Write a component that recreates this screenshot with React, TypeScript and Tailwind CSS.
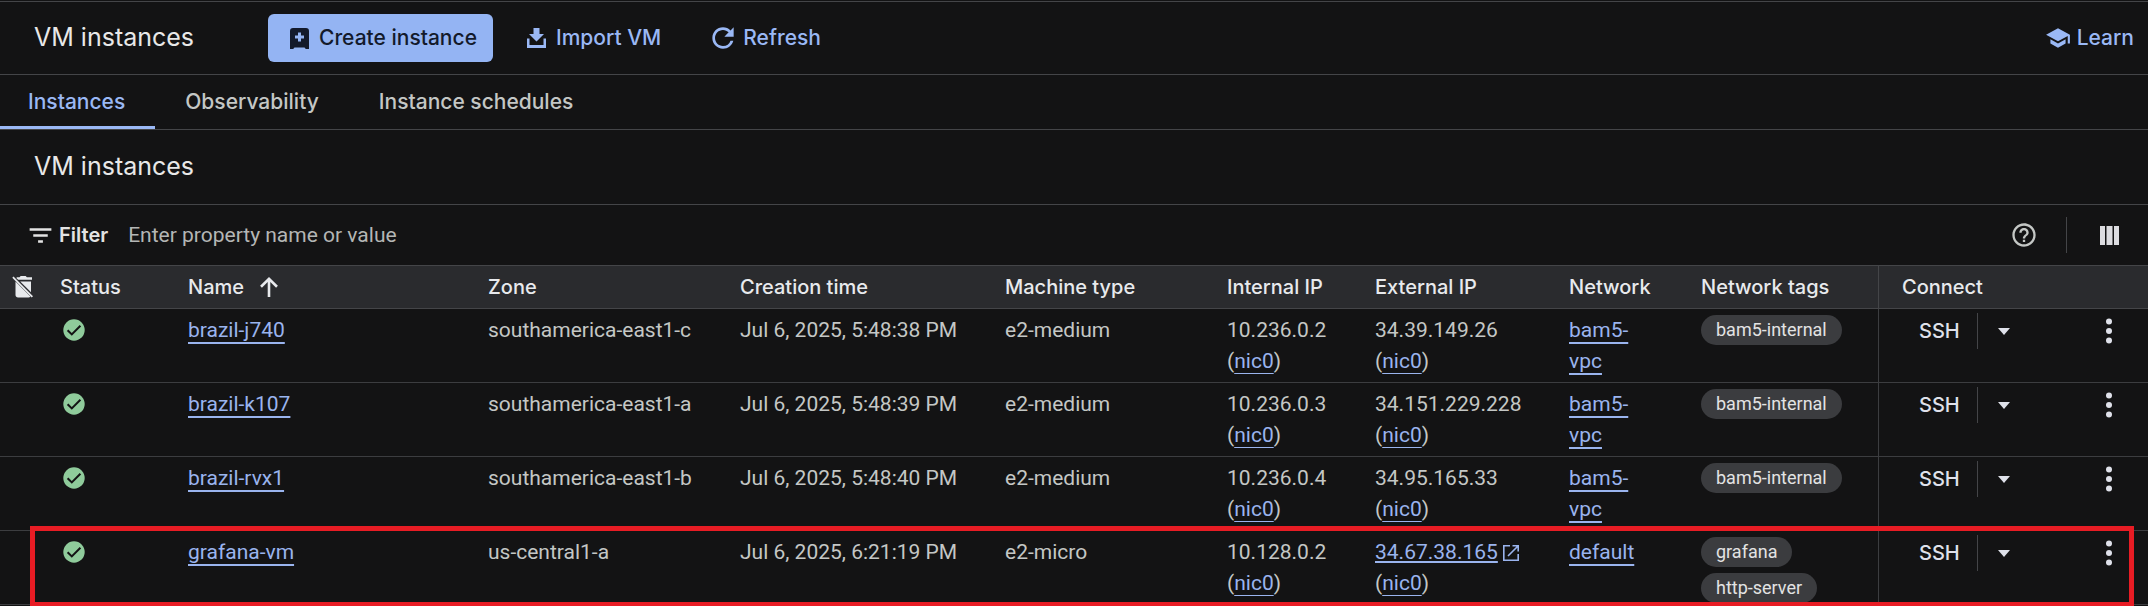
import type { ReactNode } from "react";
import { MdFilterList, MdHelpOutline, MdRefresh, MdSchool } from "react-icons/md";

type Vm = {
  name: string;
  zone: string;
  created: string;
  machine: string;
  internalIp: string;
  externalIp: string;
  externalLink?: boolean;
  network: string[];
  tags: string[];
};

const vms: Vm[] = [
  {
    name: "brazil-j740",
    zone: "southamerica-east1-c",
    created: "Jul 6, 2025, 5:48:38 PM",
    machine: "e2-medium",
    internalIp: "10.236.0.2",
    externalIp: "34.39.149.26",
    network: ["bam5-", "vpc"],
    tags: ["bam5-internal"],
  },
  {
    name: "brazil-k107",
    zone: "southamerica-east1-a",
    created: "Jul 6, 2025, 5:48:39 PM",
    machine: "e2-medium",
    internalIp: "10.236.0.3",
    externalIp: "34.151.229.228",
    network: ["bam5-", "vpc"],
    tags: ["bam5-internal"],
  },
  {
    name: "brazil-rvx1",
    zone: "southamerica-east1-b",
    created: "Jul 6, 2025, 5:48:40 PM",
    machine: "e2-medium",
    internalIp: "10.236.0.4",
    externalIp: "34.95.165.33",
    network: ["bam5-", "vpc"],
    tags: ["bam5-internal"],
  },
  {
    name: "grafana-vm",
    zone: "us-central1-a",
    created: "Jul 6, 2025, 6:21:19 PM",
    machine: "e2-micro",
    internalIp: "10.128.0.2",
    externalIp: "34.67.38.165",
    externalLink: true,
    network: ["default"],
    tags: ["grafana", "http-server"],
  },
];

function CreateIcon() {
  return (
    <svg viewBox="0 0 19 21" className="h-[21px] w-[19px]" fill="currentColor" aria-hidden="true">
      <path
        fillRule="evenodd"
        d="M3 0h13a3 3 0 0 1 3 3v18h-3.4c-.4-1.200-1-1.600-2-1.600H5.400c-1 0-1.600.4-2 1.600H0V3a3 3 0 0 1 3-3zM8 4.500v3H5v3h3v3h3v-3h3v-3h-3v-3z"
      />
    </svg>
  );
}

function ImportIcon() {
  return (
    <svg viewBox="0 0 19 20" className="h-5 w-[19px]" fill="currentColor" aria-hidden="true">
      <path d="M6.500 0h6v6H17l-7.500 7.500L2 6h4.500z" />
      <path d="M0 10.500h2.500v6.500h14v-6.500H19V20H0z" />
    </svg>
  );
}

function ColumnsIcon() {
  return (
    <svg viewBox="0 0 19 19" className="h-[19px] w-[19px]" fill="currentColor" aria-hidden="true">
      <path d="M0 0h5v19H0zM6.500 0h6v19h-6zM14 0h5v19h-5z" />
    </svg>
  );
}

function TrashOffIcon() {
  return (
    <svg viewBox="0 0 21 22" className="h-[22px] w-[21px]" fill="currentColor" aria-hidden="true">
      <path d="M7.500 1.200 8.700 0h5l1.200 1.200H20v2.600H6.200L4.300 1.900 5 1.200z" />
      <path d="M8.200 5.400H19v10.800z" />
      <path d="M3.500 5.600 18.400 20.500c-.4.600-1 .9-1.800.9H6c-1.400 0-2.500-1.100-2.500-2.500z" />
      <path d="M.3 1.700 1.500.5 21 20.300l-1.300 1.300z" />
    </svg>
  );
}

function SortArrowIcon() {
  return (
    <svg viewBox="0 0 18 20" className="h-5 w-[18px]" fill="none" stroke="currentColor" strokeWidth="2.600" aria-hidden="true">
      <path d="M9 20V2M1 9.800 9 1.900l8 7.900" />
    </svg>
  );
}

function RunningIcon() {
  return (
    <svg viewBox="0 0 22 22" className="h-[22px] w-[22px]" role="img" aria-label="Running">
      <circle cx="11" cy="11" r="10.700" fill="#8fcb9b" />
      <path d="m4.600 11.200 4.200 4.200 8.600-8.600" fill="none" stroke="#131314" strokeWidth="2" />
    </svg>
  );
}

function OpenInNewIcon() {
  return (
    <svg viewBox="0 0 16 16" className="h-4 w-4" fill="none" stroke="currentColor" strokeWidth="1.600" aria-hidden="true">
      <path d="M7 .8H.8v14.400h14.400V9M9.500.8h5.700v5.700M15 1 5 11" />
    </svg>
  );
}

const linkClass =
  "text-[#9ab4ee] underline decoration-2 underline-offset-[5px] [text-decoration-skip-ink:none]";

function Nic() {
  return (
    <span className="block">
      (
      <a href="#nic0" className="text-[#9ab4ee] underline decoration-1 underline-offset-[5px] [text-decoration-skip-ink:none]">
        nic0
      </a>
      )
    </span>
  );
}

function Th({ children, className = "" }: { children?: ReactNode; className?: string }) {
  return (
    <th scope="col" className={`border-b border-[#444548] p-0 text-left font-medium ${className}`}>
      {children}
    </th>
  );
}

function Td({ children, className = "pt-1.5 pb-[5px]" }: { children?: ReactNode; className?: string }) {
  return <td className={`border-b border-[#3c3d40] px-0 align-top ${className}`}>{children}</td>;
}

function VmRow({ vm }: { vm: Vm }) {
  return (
    <tr>
      <Td />
      <Td className="pt-[5px] pb-1.5">
        <div className="flex h-[31px] items-center pl-[3px]">
          <RunningIcon />
        </div>
      </Td>
      <Td>
        <a href={`#${vm.name}`} className={linkClass}>
          {vm.name}
        </a>
      </Td>
      <Td>{vm.zone}</Td>
      <Td>{vm.created}</Td>
      <Td>{vm.machine}</Td>
      <Td>
        {vm.internalIp}
        <Nic />
      </Td>
      <Td>
        {vm.externalLink ? (
          <a href="#external" className="flex items-center gap-[5px] text-[#9ab4ee]">
            <span className="underline decoration-2 underline-offset-2">{vm.externalIp}</span>
            <OpenInNewIcon />
          </a>
        ) : (
          vm.externalIp
        )}
        <Nic />
      </Td>
      <Td>
        <a href="#network" className="text-[#9ab4ee]">
          {vm.network.map((part) => (
            <span key={part} className="block w-fit underline decoration-2 underline-offset-[5px] [text-decoration-skip-ink:none]">
              {part}
            </span>
          ))}
        </a>
      </Td>
      <Td className="pt-1.5 pb-0">
        <div className="flex flex-col items-start gap-1.5">
          {vm.tags.map((tag) => (
            <span key={tag} className="h-[30px] rounded-full bg-[#3b3c3f] px-[15px] text-lg leading-[30px] text-[#e3e3e3]">
              {tag}
            </span>
          ))}
        </div>
      </Td>
      <Td className="border-l pt-1 pb-1.5">
        <div className="flex h-9 items-center pr-7 pl-10 text-xl text-[#dfe1ea]">
          <button type="button" className="h-9 pr-[17px] font-[Inter,sans-serif] font-medium">
            SSH
          </button>
          <button type="button" aria-label="More SSH options" className="flex h-9 items-center border-l border-[#444548] pl-5">
            <svg viewBox="0 0 12 7" className="h-[7px] w-3" fill="currentColor" aria-hidden="true">
              <path d="M0 0h12L6 7z" />
            </svg>
          </button>
          <button type="button" aria-label="More actions" className="ml-auto px-2">
            <svg viewBox="0 0 6 26" className="h-[26px] w-1.5" fill="currentColor" aria-hidden="true">
              <circle cx="3" cy="3.500" r="3" />
              <circle cx="3" cy="13" r="3" />
              <circle cx="3" cy="22.500" r="3" />
            </svg>
          </button>
        </div>
      </Td>
    </tr>
  );
}

export default function App() {
  return (
    <main className="min-h-screen overflow-hidden bg-[#131314] font-[Roboto,sans-serif] text-[21px] text-[#c4c7c5]">
      <header className="mt-px flex h-[74px] items-center border-y border-[#444548] font-[Inter,sans-serif] font-medium">
        <h1 className="w-[268px] pl-[34px] text-[25px] font-normal text-[#e8e8e8]">VM instances</h1>
        <button type="button" className="flex h-12 items-center gap-2.5 rounded-md bg-[#94b4f3] pr-4 pl-[22px] text-[#131a2b]">
          <CreateIcon />
          Create instance
        </button>
        <button type="button" className="ml-[34px] flex items-center gap-2.5 text-[#9ab8f5]">
          <ImportIcon />
          Import VM
        </button>
        <button type="button" className="ml-[46px] flex items-center gap-1 text-[#9ab8f5]">
          <MdRefresh className="size-8" />
          Refresh
        </button>
        <a href="#learn" className="mr-3.5 ml-auto flex items-center gap-1.5 text-[#9ab8f5]">
          <MdSchool className="size-[26px]" />
          Learn
        </a>
      </header>

      <nav className="flex h-[55px] border-b border-[#444548] font-[Inter,sans-serif] font-medium">
        <a href="#instances" aria-current="page" className="flex items-center border-b-[3px] border-[#9ab8f5] pt-0.5 pr-[30px] pl-7 text-[#9ab8f5]">
          Instances
        </a>
        <a href="#observability" className="flex items-center border-b-[3px] border-transparent px-[30px] pt-0.5">
          Observability
        </a>
        <a href="#schedules" className="flex items-center border-b-[3px] border-transparent px-[30px] pt-0.5">
          Instance schedules
        </a>
      </nav>

      <section>
        <h2 className="flex h-[75px] items-center border-b border-[#444548] pl-[34px] font-[Inter,sans-serif] text-[25px] text-[#e8e8e8]">
          VM instances
        </h2>

        <div className="flex h-[61px] items-center border-b border-[#444548] pr-[29px] pl-[26px]">
          <label htmlFor="filter" className="flex items-center gap-1 font-[Inter,sans-serif] text-xl font-semibold text-[#e3e3e3]">
            <MdFilterList className="size-[29px]" />
            Filter
          </label>
          <input
            id="filter"
            type="text"
            placeholder="Enter property name or value"
            className="ml-5 min-w-0 flex-1 bg-transparent pt-0.5 outline-none placeholder:text-[#b4b6b5]"
          />
          <button type="button" aria-label="Help" className="mr-7">
            <MdHelpOutline className="size-7" />
          </button>
          <span className="h-9 w-px bg-[#444548]" />
          <button type="button" aria-label="Column display options" className="ml-[33px] text-[#dcdce0]">
            <ColumnsIcon />
          </button>
        </div>

        <div className="relative">
          <table className="w-full table-fixed border-separate border-spacing-0 leading-[31px]">
            <colgroup>
              <col className="w-[60px]" />
              <col className="w-[128px]" />
              <col className="w-[300px]" />
              <col className="w-[252px]" />
              <col className="w-[265px]" />
              <col className="w-[222px]" />
              <col className="w-[148px]" />
              <col className="w-[194px]" />
              <col className="w-[132px]" />
              <col className="w-[177px]" />
              <col className="w-[270px]" />
            </colgroup>
            <thead className="bg-[#2a2b2e] font-[Inter,sans-serif] text-xl text-[#e8eaed]">
              <tr className="h-[43px]">
                <Th className="pl-3">
                  <TrashOffIcon />
                </Th>
                <Th>Status</Th>
                <Th>
                  <span className="flex items-center gap-4">
                    Name
                    <SortArrowIcon />
                  </span>
                </Th>
                <Th>Zone</Th>
                <Th>Creation time</Th>
                <Th>Machine type</Th>
                <Th>Internal IP</Th>
                <Th>External IP</Th>
                <Th>Network</Th>
                <Th>Network tags</Th>
                <Th className="border-l pl-[23px]">Connect</Th>
              </tr>
            </thead>
            <tbody className="leading-[31px]">
              {vms.map((vm) => (
                <VmRow key={vm.name} vm={vm} />
              ))}
            </tbody>
          </table>
          <div className="pointer-events-none absolute right-3.5 -bottom-0.5 left-[30px] h-[81px] border-5 border-[#e81c24]" />
        </div>
      </section>
    </main>
  );
}
